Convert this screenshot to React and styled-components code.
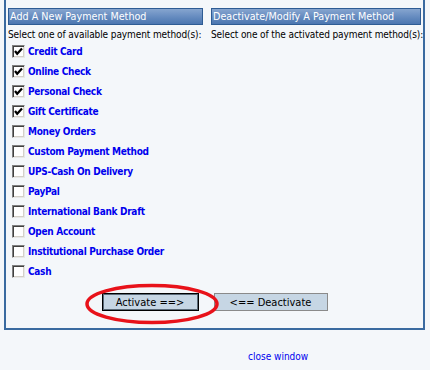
import React, { useState } from 'react';
import styled, { createGlobalStyle } from 'styled-components';

const GlobalStyle = createGlobalStyle`
  html, body {
    margin: 0;
    padding: 0;
    background: #f4f7fa;
  }
  body {
    font-family: "DejaVu Sans Condensed", "DejaVu Sans", sans-serif;
    font-size: 10px;
    color: #000;
  }
`;

const methods = [
  { name: 'Credit Card', checked: true },
  { name: 'Online Check', checked: true },
  { name: 'Personal Check', checked: true },
  { name: 'Gift Certificate', checked: true },
  { name: 'Money Orders', checked: false },
  { name: 'Custom Payment Method', checked: false },
  { name: 'UPS-Cash On Delivery', checked: false },
  { name: 'PayPal', checked: false },
  { name: 'International Bank Draft', checked: false },
  { name: 'Open Account', checked: false },
  { name: 'Institutional Purchase Order', checked: false },
  { name: 'Cash', checked: false },
];

// the box continues above the visible part of the page, so no top edge
const Frame = styled.div`
  box-sizing: border-box;
  width: 421px;
  margin-left: 4px;
  border: 2px solid #3a6aa0;
  border-top: 0;
  padding: 8px 2px 0 2px;
`;

const Columns = styled.div`
  display: grid;
  grid-template-columns: 195px minmax(0, 1fr);
  column-gap: 8px;
`;

const Panel = styled.div`
  display: flex;
  flex-direction: column;
  min-width: 0;
`;

const PanelHeader = styled.div`
  box-sizing: border-box;
  height: 17px;
  border: 1px solid #2e5c94;
  background: linear-gradient(#86a5cf, #6a8fc2 45%, #4b76b0);
  color: #fff;
  font-size: 10.7px;
  line-height: 15px;
  padding-left: 1px;
  white-space: nowrap;
  overflow: hidden;
`;

const Hint = styled.div`
  margin-top: 3px;
  line-height: 13px;
  letter-spacing: -0.1px;
  white-space: nowrap;
`;

const MethodList = styled.div`
  display: flex;
  flex-direction: column;
  padding-left: 4px;
`;

const MethodRow = styled.label`
  display: flex;
  align-items: center;
  gap: 3px;
  height: 20px;
  cursor: pointer;
`;

const Box = styled.span`
  box-sizing: border-box;
  width: 13px;
  height: 13px;
  background: #fff;
  border-style: solid;
  border-width: 1px;
  border-color: #808080 #e8e8e8 #e8e8e8 #808080;
  box-shadow: inset 1px 1px 0 #404040, inset -1px -1px 0 #d4d0c8;
  display: flex;
  align-items: center;
  justify-content: center;
`;

const MethodName = styled.span`
  color: #0000ee;
  font-weight: bold;
  font-size: 10px;
  letter-spacing: -0.3px;
  white-space: nowrap;
`;

const ButtonRow = styled.div`
  position: relative;
  display: flex;
  justify-content: center;
  gap: 15px;
  margin-top: 12px;
  padding-bottom: 17px;
`;

const Button = styled.button`
  box-sizing: border-box;
  height: 18px;
  width: ${p => p.$w}px;
  padding: 0;
  background: #c6d6e4;
  border: ${p => (p.$primary ? '1px solid #000' : '1px solid #8a8a8a')};
  box-shadow: ${p => (p.$primary ? 'inset 0 0 0 1px #5a6a78' : 'none')};
  font-family: "DejaVu Sans Condensed", "DejaVu Sans", sans-serif;
  font-size: 11px;
  color: #000;
  cursor: pointer;
`;

const Highlight = styled.svg`
  position: absolute;
  left: 76px;
  top: -10px;
  pointer-events: none;
`;

const Footer = styled.div`
  padding: 21px 0 0 248px;
`;

const CloseLink = styled.a`
  color: #0000ee;
  text-decoration: none;
  font-size: 10px;
`;

const Check = () => (
  <svg width="9" height="9" viewBox="0 0 9 9">
    <path d="M1 4 L3.2 6.8 L8 1.5" fill="none" stroke="#000" strokeWidth="2.2" />
  </svg>
);

const MethodItem = ({ name, checked, onToggle }) => (
  <MethodRow onClick={onToggle}>
    <Box>{checked && <Check />}</Box>
    <MethodName>{name}</MethodName>
  </MethodRow>
);

export default function App() {
  const [items, setItems] = useState(methods);

  const toggle = i => {
    setItems(items.map((m, j) => (j === i ? { ...m, checked: !m.checked } : m)));
  };

  return (
    <>
      <GlobalStyle />
      <Frame>
        <Columns>
          <Panel>
            <PanelHeader>Add A New Payment Method</PanelHeader>
            <Hint>Select one of available payment method(s):</Hint>
            <MethodList>
              {items.map((m, i) => (
                <MethodItem key={m.name} name={m.name} checked={m.checked} onToggle={() => toggle(i)} />
              ))}
            </MethodList>
          </Panel>
          <Panel>
            <PanelHeader>Deactivate/Modify A Payment Method</PanelHeader>
            <Hint>Select one of the activated payment method(s):</Hint>
          </Panel>
        </Columns>
        <ButtonRow>
          <Button $primary $w={97}>Activate ==&gt;</Button>
          <Button $w={114}>&lt;== Deactivate</Button>
          <Highlight width="136" height="42" viewBox="0 0 136 42">
            <ellipse cx="68" cy="21" rx="65" ry="18.5" fill="none" stroke="#e8121a" strokeWidth="3.5" />
          </Highlight>
        </ButtonRow>
      </Frame>
      <Footer>
        <CloseLink href="#">close window</CloseLink>
      </Footer>
    </>
  );
}
